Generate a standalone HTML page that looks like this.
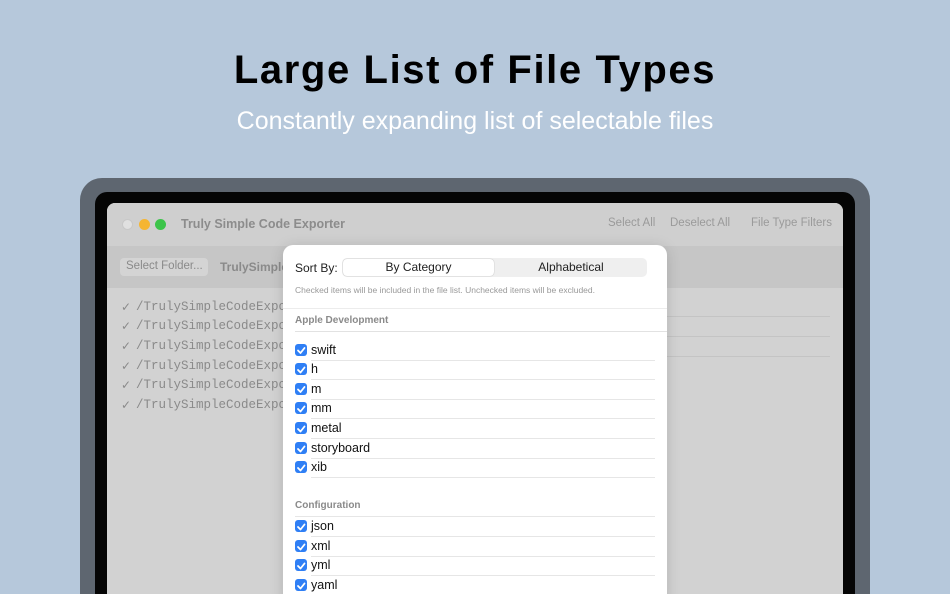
<!DOCTYPE html>
<html><head><meta charset="utf-8"><style>
*{margin:0;padding:0;box-sizing:border-box}
html,body{width:950px;height:594px;overflow:hidden}
body{background:#b6c8db;font-family:"Liberation Sans",sans-serif;position:relative}
.a{position:absolute}
h1{position:absolute;top:48px;left:0;width:950px;text-align:center;font-size:40px;font-weight:900;color:#000;letter-spacing:1.6px}
.sub{top:107px;left:0;width:950px;text-align:center;font-size:25px;color:#fff}
.lap{left:80px;top:178px;width:790px;height:416px;background:#5e6670;border-radius:22px 22px 0 0}
.bez{left:95px;top:192px;width:760px;height:402px;background:#050505;border-radius:12px 12px 0 0}
.scr{left:107px;top:203px;width:736px;height:391px;background:#d2d2d2;border-radius:8px 8px 0 0;overflow:hidden}
.tb{left:0;top:0;width:736px;height:43px;background:#cfcfcf}
.tool{left:0;top:43px;width:736px;height:42px;background:#c6c6c6}
.dot{width:11px;height:11px;border-radius:50%;top:16px}
.gt{color:#9a9a9a;font-size:11.5px}
.row{left:29px;font-family:"Liberation Mono",monospace;font-size:12.5px;color:#8a8a8a}
.ck{left:14px;font-size:12px;color:#8a8a8a}
.pop{left:283px;top:245px;width:384px;height:360px;background:#fff;border-radius:10px;box-shadow:0 2px 14px rgba(0,0,0,.15)}
.it{left:12px;width:360px;height:20px;font-size:12.5px;color:#111}
.cb{position:absolute;left:0;top:3px;width:12px;height:12px;background:#2f7ff5;border-radius:3px}
.it span{position:absolute;left:16px;top:2px}
.it i{position:absolute;left:16px;right:0;bottom:0;height:1px;background:#e6e6e6}
.hd{left:12px;font-size:10px;font-weight:bold;color:#8a8a8a}
</style></head><body>
<h1>Large List of File Types</h1>
<div class="a sub">Constantly expanding list of selectable files</div>
<div class="a lap"></div>
<div class="a bez"></div>
<div class="a scr">
 <div class="a tb"></div>
 <div class="a tool"></div>
 <div class="a dot" style="left:15px;background:#e0e0e0;border:1px solid #c8c8c8"></div>
 <div class="a dot" style="left:32px;background:#f5b532"></div>
 <div class="a dot" style="left:48px;background:#3cc44a"></div>
 <div class="a" style="left:74px;top:14px;font-size:12.5px;font-weight:bold;color:#8c8c8c">Truly Simple Code Exporter</div>
 <div class="a gt" style="left:501px;top:14px">Select All</div>
 <div class="a gt" style="left:563px;top:14px">Deselect All</div>
 <div class="a gt" style="left:644px;top:14px">File Type Filters</div>
 <div class="a" style="left:13px;top:55px;width:88px;height:18px;background:#d4d4d4;border-radius:4px;font-size:11.5px;color:#8a8a8a;padding:2px 0 0 6px">Select Folder...</div>
 <div class="a" style="left:113px;top:57px;font-size:12px;font-weight:bold;color:#8a8a8a">TrulySimple</div>
 <div class="a ck" style="top:97px">✓</div><div class="a row" style="top:97px">/TrulySimpleCodeExporte</div>
 <div class="a ck" style="top:116px">✓</div><div class="a row" style="top:116px">/TrulySimpleCodeExporte</div>
 <div class="a ck" style="top:136px">✓</div><div class="a row" style="top:136px">/TrulySimpleCodeExporte</div>
 <div class="a ck" style="top:156px">✓</div><div class="a row" style="top:156px">/TrulySimpleCodeExporte</div>
 <div class="a ck" style="top:175px">✓</div><div class="a row" style="top:175px">/TrulySimpleCodeExporte</div>
 <div class="a ck" style="top:195px">✓</div><div class="a row" style="top:195px">/TrulySimpleCodeExporte</div>
 <div class="a" style="left:560px;top:113px;width:163px;height:1px;background:#c4c4c4"></div>
 <div class="a" style="left:560px;top:133px;width:163px;height:1px;background:#c4c4c4"></div>
 <div class="a" style="left:560px;top:153px;width:163px;height:1px;background:#c4c4c4"></div>
</div>
<div class="a pop">
 <div class="a" style="left:12px;top:16px;font-size:12px;color:#222">Sort By:</div>
 <div class="a" style="left:59px;top:13px;width:305px;height:19px;background:#efefef;border-radius:5px"></div>
 <div class="a" style="left:60px;top:14px;width:151px;height:17px;background:#fff;border-radius:4px;box-shadow:0 0 1px rgba(0,0,0,.35);text-align:center;font-size:12px;color:#222;padding-top:1px">By Category</div>
 <div class="a" style="left:212px;top:15px;width:152px;text-align:center;font-size:12px;color:#222">Alphabetical</div>
 <div class="a" style="left:12px;top:40px;font-size:8.5px;color:#999">Checked items will be included in the file list. Unchecked items will be excluded.</div>
 <div class="a" style="left:0;top:63px;width:384px;height:1px;background:#ececec"></div>
 <div class="a hd" style="top:70px">Apple Development</div>
 <div class="a" style="left:12px;top:86px;width:372px;height:1px;background:#e2e2e2"></div>
 <div class="a it" style="top:96px"><b class="cb"></b><span>swift</span><i></i></div>
 <div class="a it" style="top:115px"><b class="cb"></b><span>h</span><i></i></div>
 <div class="a it" style="top:135px"><b class="cb"></b><span>m</span><i></i></div>
 <div class="a it" style="top:154px"><b class="cb"></b><span>mm</span><i></i></div>
 <div class="a it" style="top:174px"><b class="cb"></b><span>metal</span><i></i></div>
 <div class="a it" style="top:194px"><b class="cb"></b><span>storyboard</span><i></i></div>
 <div class="a it" style="top:213px"><b class="cb"></b><span>xib</span><i></i></div>
 <div class="a hd" style="top:255px">Configuration</div>
 <div class="a" style="left:12px;top:271px;width:360px;height:1px;background:#e6e6e6"></div>
 <div class="a it" style="top:272px"><b class="cb"></b><span>json</span><i></i></div>
 <div class="a it" style="top:292px"><b class="cb"></b><span>xml</span><i></i></div>
 <div class="a it" style="top:311px"><b class="cb"></b><span>yml</span><i></i></div>
 <div class="a it" style="top:331px"><b class="cb"></b><span>yaml</span><i></i></div>
</div>
<svg class="a" style="left:0;top:0" width="950" height="594">
<g fill="none" stroke="#fff" stroke-width="1.8" stroke-linecap="round" stroke-linejoin="round">
<path d="M298 350.5l2.5 2.5 4-5"/><path d="M298 370l2.5 2.5 4-5"/><path d="M298 389.5l2.5 2.5 4-5"/><path d="M298 409l2.5 2.5 4-5"/><path d="M298 429l2.5 2.5 4-5"/><path d="M298 449l2.5 2.5 4-5"/><path d="M298 468l2.5 2.5 4-5"/><path d="M298 527l2.5 2.5 4-5"/><path d="M298 547l2.5 2.5 4-5"/><path d="M298 566l2.5 2.5 4-5"/><path d="M298 586l2.5 2.5 4-5"/>
</g></svg>
</body></html>
